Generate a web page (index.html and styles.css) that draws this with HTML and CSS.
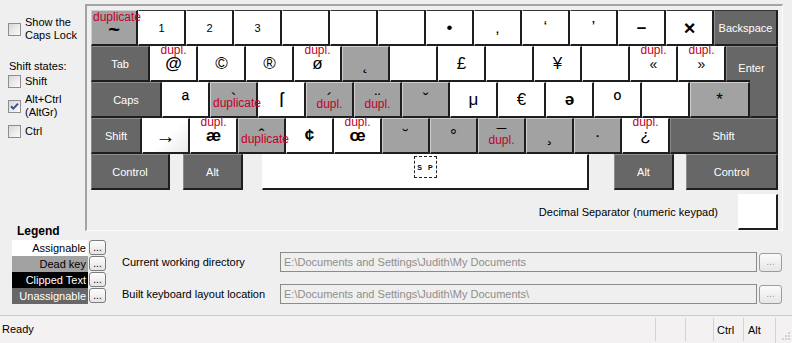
FILE: index.html
```html
<!DOCTYPE html>
<html lang="en">
<head>
    <meta charset="UTF-8">
    <title>Keyboard Layout Creator</title>
    <link rel="stylesheet" href="styles.css">
</head>
<body>
    <div class="top">
        <div class="sidebar">
            <label class="check"><span class="box"></span><span>Show the<br>Caps Lock</span></label>
            <div class="states-title">Shift states:</div>
            <label class="check shift-opt"><span class="box"></span><span>Shift</span></label>
            <label class="check altgr-opt"><span class="box"><svg width="11" height="11" viewBox="0 0 11 11"><path d="M2 5.2 L4.3 7.6 L9 2.6" fill="none" stroke="#3d4f8e" stroke-width="2"/></svg></span><span>Alt+Ctrl<br>(AltGr)</span></label>
            <label class="check ctrl-opt"><span class="box"></span><span>Ctrl</span></label>
        </div>

        <div class="panel">
            <div class="keyboard">
                <div class="row row1">
                    <div class="key dead tilde"><span class="dup long">duplicate</span><span class="g big b">~</span></div>
                    <div class="key"><span class="num">1</span></div>
                    <div class="key"><span class="num">2</span></div>
                    <div class="key"><span class="num">3</span></div>
                    <div class="key"></div>
                    <div class="key"></div>
                    <div class="key"></div>
                    <div class="key"><span class="g">•</span></div>
                    <div class="key"><span class="g">‚</span></div>
                    <div class="key"><span class="g">‘</span></div>
                    <div class="key"><span class="g">’</span></div>
                    <div class="key"><span class="g b">–</span></div>
                    <div class="key"><span class="g big b">×</span></div>
                    <div class="key fixed bksp">Backspace</div>
                </div>
                <div class="row">
                    <div class="key fixed tab">Tab</div>
                    <div class="key"><span class="dup">dupl.</span><span class="g b">@</span></div>
                    <div class="key"><span class="g">©</span></div>
                    <div class="key"><span class="g">®</span></div>
                    <div class="key"><span class="dup">dupl.</span><span class="g">ø</span></div>
                    <div class="key dead"><span class="g">˛</span></div>
                    <div class="key"></div>
                    <div class="key"><span class="g">£</span></div>
                    <div class="key"></div>
                    <div class="key"><span class="g">¥</span></div>
                    <div class="key"></div>
                    <div class="key"><span class="dup">dupl.</span><span class="g sm">«</span></div>
                    <div class="key"><span class="dup">dupl.</span><span class="g sm">»</span></div>
                    <div class="key fixed enter-top">Enter</div>
                </div>
                <div class="row">
                    <div class="key fixed caps">Caps</div>
                    <div class="key"><span class="g big">ª</span></div>
                    <div class="key dead"><span class="dup long">duplicate</span><span class="g">`</span></div>
                    <div class="key"><span class="g big">ſ</span></div>
                    <div class="key dead"><span class="dup low">dupl.</span><span class="g">´</span></div>
                    <div class="key dead"><span class="dup low">dupl.</span><span class="g">¨</span></div>
                    <div class="key dead"><span class="g">ˇ</span></div>
                    <div class="key"><span class="g">μ</span></div>
                    <div class="key"><span class="g">€</span></div>
                    <div class="key"><span class="g b">ə</span></div>
                    <div class="key"><span class="g big">º</span></div>
                    <div class="key"></div>
                    <div class="key dead oem"><span class="g">*</span></div>
                    <div class="key fixed enter-bottom"></div>
                </div>
                <div class="row">
                    <div class="key fixed lshift">Shift</div>
                    <div class="key arrow"><span class="g big">→</span></div>
                    <div class="key"><span class="dup">dupl.</span><span class="g b">æ</span></div>
                    <div class="key dead"><span class="dup long">duplicate</span><span class="g">ˆ</span></div>
                    <div class="key"><span class="g b">¢</span></div>
                    <div class="key"><span class="dup">dupl.</span><span class="g b">œ</span></div>
                    <div class="key dead"><span class="g">˘</span></div>
                    <div class="key dead"><span class="g">°</span></div>
                    <div class="key dead"><span class="dup low">dupl.</span><span class="g">¯</span></div>
                    <div class="key dead"><span class="g">¸</span></div>
                    <div class="key dead"><span class="g">·</span></div>
                    <div class="key"><span class="dup">dupl.</span><span class="g">¿</span></div>
                    <div class="key fixed rshift">Shift</div>
                </div>
                <div class="row">
                    <div class="key fixed lctrl">Control</div>
                    <div class="key fixed lalt">Alt</div>
                    <div class="key space"><span class="sp">S P</span></div>
                    <div class="key fixed ralt">Alt</div>
                    <div class="key fixed rctrl">Control</div>
                </div>
            </div>
            <div class="decimal">
                <span>Decimal Separator (numeric keypad)</span>
                <div class="key decimal-key"></div>
            </div>
        </div>
    </div>

    <div class="bottom">
        <div class="legend">
            <h3>Legend</h3>
            <div class="legend-row"><span class="swatch assignable">Assignable</span><button class="more">...</button></div>
            <div class="legend-row"><span class="swatch deadkey">Dead key</span><button class="more">...</button></div>
            <div class="legend-row"><span class="swatch clipped">Clipped Text</span><button class="more">...</button></div>
            <div class="legend-row"><span class="swatch unassignable">Unassignable</span><button class="more">...</button></div>
        </div>
        <div class="paths">
            <div class="path-row">
                <span class="path-label">Current working directory</span>
                <div class="path-field">E:\Documents and Settings\Judith\My Documents</div>
                <button class="browse">...</button>
            </div>
            <div class="path-row">
                <span class="path-label">Built keyboard layout location</span>
                <div class="path-field">E:\Documents and Settings\Judith\My Documents\</div>
                <button class="browse">...</button>
            </div>
        </div>
    </div>

    <div class="status">
        <div class="msg">Ready</div>
        <div class="pane p30"></div>
        <div class="pane p28"></div>
        <div class="pane p30">Ctrl</div>
        <div class="pane p32 alt-pane">Alt</div>
        <div class="grip">
            <svg width="12" height="12" viewBox="0 0 12 12">
                <rect x="9" y="3" width="2" height="2" fill="#d2d2d2"/>
                <rect x="6" y="6" width="2" height="2" fill="#d2d2d2"/>
                <rect x="9" y="6" width="2" height="2" fill="#d2d2d2"/>
                <rect x="3" y="9" width="2" height="2" fill="#d2d2d2"/>
                <rect x="6" y="9" width="2" height="2" fill="#d2d2d2"/>
                <rect x="9" y="9" width="2" height="2" fill="#d2d2d2"/>
            </svg>
        </div>
    </div>
</body>
</html>
```

FILE: styles.css
```css
*{
    margin: 0;
    padding: 0;
    box-sizing: border-box;
}
body{
    width: 792px;
    height: 343px;
    overflow: hidden;
    background-color: #efefef;
    font-family: "Liberation Sans", Arial, sans-serif;
    font-size: 11px;
    color: #000;
}

/* top part: options + keyboard */
.top{
    display: flex;
    height: 224px;
}
.sidebar{
    width: 85px;
    padding: 16px 0 0 8px;
}
.check{
    display: flex;
    align-items: center;
    gap: 4px;
    line-height: 13px;
}
.box{
    width: 13px;
    height: 13px;
    flex: none;
    border: 1px solid #8d8d8d;
    background: linear-gradient(135deg, #d8d8d8, #fbfbfb);
}
.box svg{
    display: block;
}
.states-title{
    margin-top: 18px;
    margin-left: 1px;
    line-height: 13px;
}
.shift-opt{ margin-top: 2px; }
.altgr-opt{ margin-top: 5px; }
.ctrl-opt{ margin-top: 6px; }

.panel{
    width: 698px;
    height: 227px;
    flex: none;
    margin-top: 4px;
    padding: 4px 4px 0 4px;
    border-style: solid;
    border-width: 2px 1px 1px 2px;
    border-color: #a4a4a4 #fdfdfd #fdfdfd #a4a4a4;
}
.row{
    display: flex;
    height: 36px;
}

.key{
    position: relative;
    width: 48px;
    height: 36px;
    flex: none;
    display: flex;
    align-items: center;
    justify-content: center;
    background-color: #fff;
    border-style: solid;
    border-width: 1px 2px 2px 1px;
    border-color: #fff #1e1e1e #1e1e1e #fff;
    font-family: "Liberation Sans", "DejaVu Sans", sans-serif;
}
.row1 .key{
    border-top-color: #333;
}
.dead{
    background-color: #a2a2a2;
    border-color: #cdcdcd #1e1e1e #1e1e1e #cdcdcd;
}
.row1 .dead{
    border-top-color: #cdcdcd;
}
.fixed{
    background-color: #676767;
    border-color: #8c8c8c #1e1e1e #1e1e1e #8c8c8c;
    color: #fff;
    font-size: 11px;
}
.arrow{
    background: linear-gradient(135deg, #fff 55%, #e9e9e9);
}

.g{
    font-size: 17px;
    line-height: 20px;
}
.g.sm{
    font-size: 14px;
}
.g.big{
    font-size: 20px;
}
.b{
    font-weight: bold;
}
.num{
    font-size: 11px;
}

.dup{
    position: absolute;
    top: -3px;
    left: 0;
    right: 0;
    z-index: 1;
    text-align: center;
    color: #c2002a;
    font-size: 12px;
    line-height: 12px;
}
.dup.low{
    top: 15px;
}
.dup.long{
    top: 14px;
    left: 2px;
    right: auto;
    text-align: left;
}
.row1 .dup.long{
    top: 0;
    left: 1px;
}

.tilde{ width: 47px; }
.tilde .g{
    margin-top: 2px;
}
.bksp{ width: 64px; }
.tab{ width: 59px; }
.enter-top{
    width: 52px;
    padding-top: 9px;
}
.caps{ width: 71px; }
.oem{ width: 60px; }
.enter-bottom{
    width: 28px;
    height: 38px;
    margin-top: -2px;
    border-top-width: 0;
    border-left-color: #676767;
}
.lshift{ width: 51px; }
.rshift{ width: 108px; }
.lctrl{ width: 79px; }
.lalt{
    width: 60px;
    margin-left: 13px;
}
.space{
    width: 327px;
    margin-left: 19px;
    align-items: flex-start;
}
.ralt{
    width: 60px;
    margin-left: 25px;
}
.rctrl{
    width: 92px;
    margin-left: 12px;
}
.sp{
    display: flex;
    align-items: center;
    justify-content: center;
    width: 23px;
    height: 22px;
    margin-top: 1px;
    border: 1px dashed #222;
    font-size: 7px;
    font-weight: bold;
    letter-spacing: 2px;
    padding-left: 2px;
}

.decimal{
    display: flex;
    justify-content: flex-end;
    align-items: center;
    gap: 20px;
    margin-top: 4px;
}
.decimal-key{
    width: 40px;
}

/* bottom part: legend + paths */
.bottom{
    display: flex;
    align-items: flex-start;
}
.legend{
    padding-left: 12px;
}
.legend h3{
    padding-left: 5px;
    font-size: 12px;
    line-height: 14px;
    margin-bottom: 2px;
}
.legend-row{
    display: flex;
    height: 16px;
}
.swatch{
    width: 76px;
    height: 16px;
    text-align: right;
    padding-right: 2px;
    line-height: 16px;
}
.assignable{ background-color: #fff; }
.deadkey{ background-color: #a2a2a2; }
.clipped{ background-color: #000; color: #fff; }
.unassignable{ background-color: #676767; color: #fff; }
.more{
    width: 17px;
    height: 15px;
    margin-left: 1px;
    border: 1px solid #7c7c7c;
    border-radius: 3px;
    background: linear-gradient(#fdfdfd, #e4e4e4);
    font-family: "Liberation Sans", Arial, sans-serif;
    font-size: 10px;
    line-height: 9px;
    color: #000;
}

.paths{
    margin-left: 16px;
    padding-top: 28px;
}
.path-row{
    display: flex;
    align-items: center;
    height: 20px;
}
.path-row + .path-row{
    margin-top: 12px;
}
.path-label{
    width: 158px;
}
.path-field{
    width: 477px;
    height: 20px;
    padding-left: 3px;
    border: 1px solid #8b8b8b;
    color: #8e8e8e;
    line-height: 18px;
    white-space: nowrap;
}
.browse{
    width: 23px;
    height: 19px;
    margin-left: 2px;
    border: 1px solid #9c9c9c;
    border-radius: 3px;
    background: linear-gradient(#fbfbfb, #e6e6e6);
    color: #a0a0a0;
    font-family: "Liberation Sans", Arial, sans-serif;
    font-size: 10px;
    line-height: 10px;
}

/* status bar */
.status{
    display: flex;
    height: 28px;
    margin-top: 11px;
    border-top: 1px solid #cbcbcb;
    background-color: #f3f1f1;
}
.msg{
    flex: 1;
    padding-left: 2px;
    line-height: 27px;
}
.pane{
    height: 23px;
    margin-top: 2px;
    padding-left: 3px;
    border-left: 1px solid #d5d2d2;
    line-height: 24px;
}
.p30{ width: 30px; }
.p28{ width: 28px; }
.p32{ width: 32px; }
.alt-pane{ padding-left: 4px; }
.grip{
    width: 17px;
    margin-top: 2px;
    border-left: 1px solid #d5d2d2;
    display: flex;
    align-items: flex-end;
    justify-content: flex-end;
    padding: 0 1px 2px 0;
}
.grip svg{
    display: block;
}
```
